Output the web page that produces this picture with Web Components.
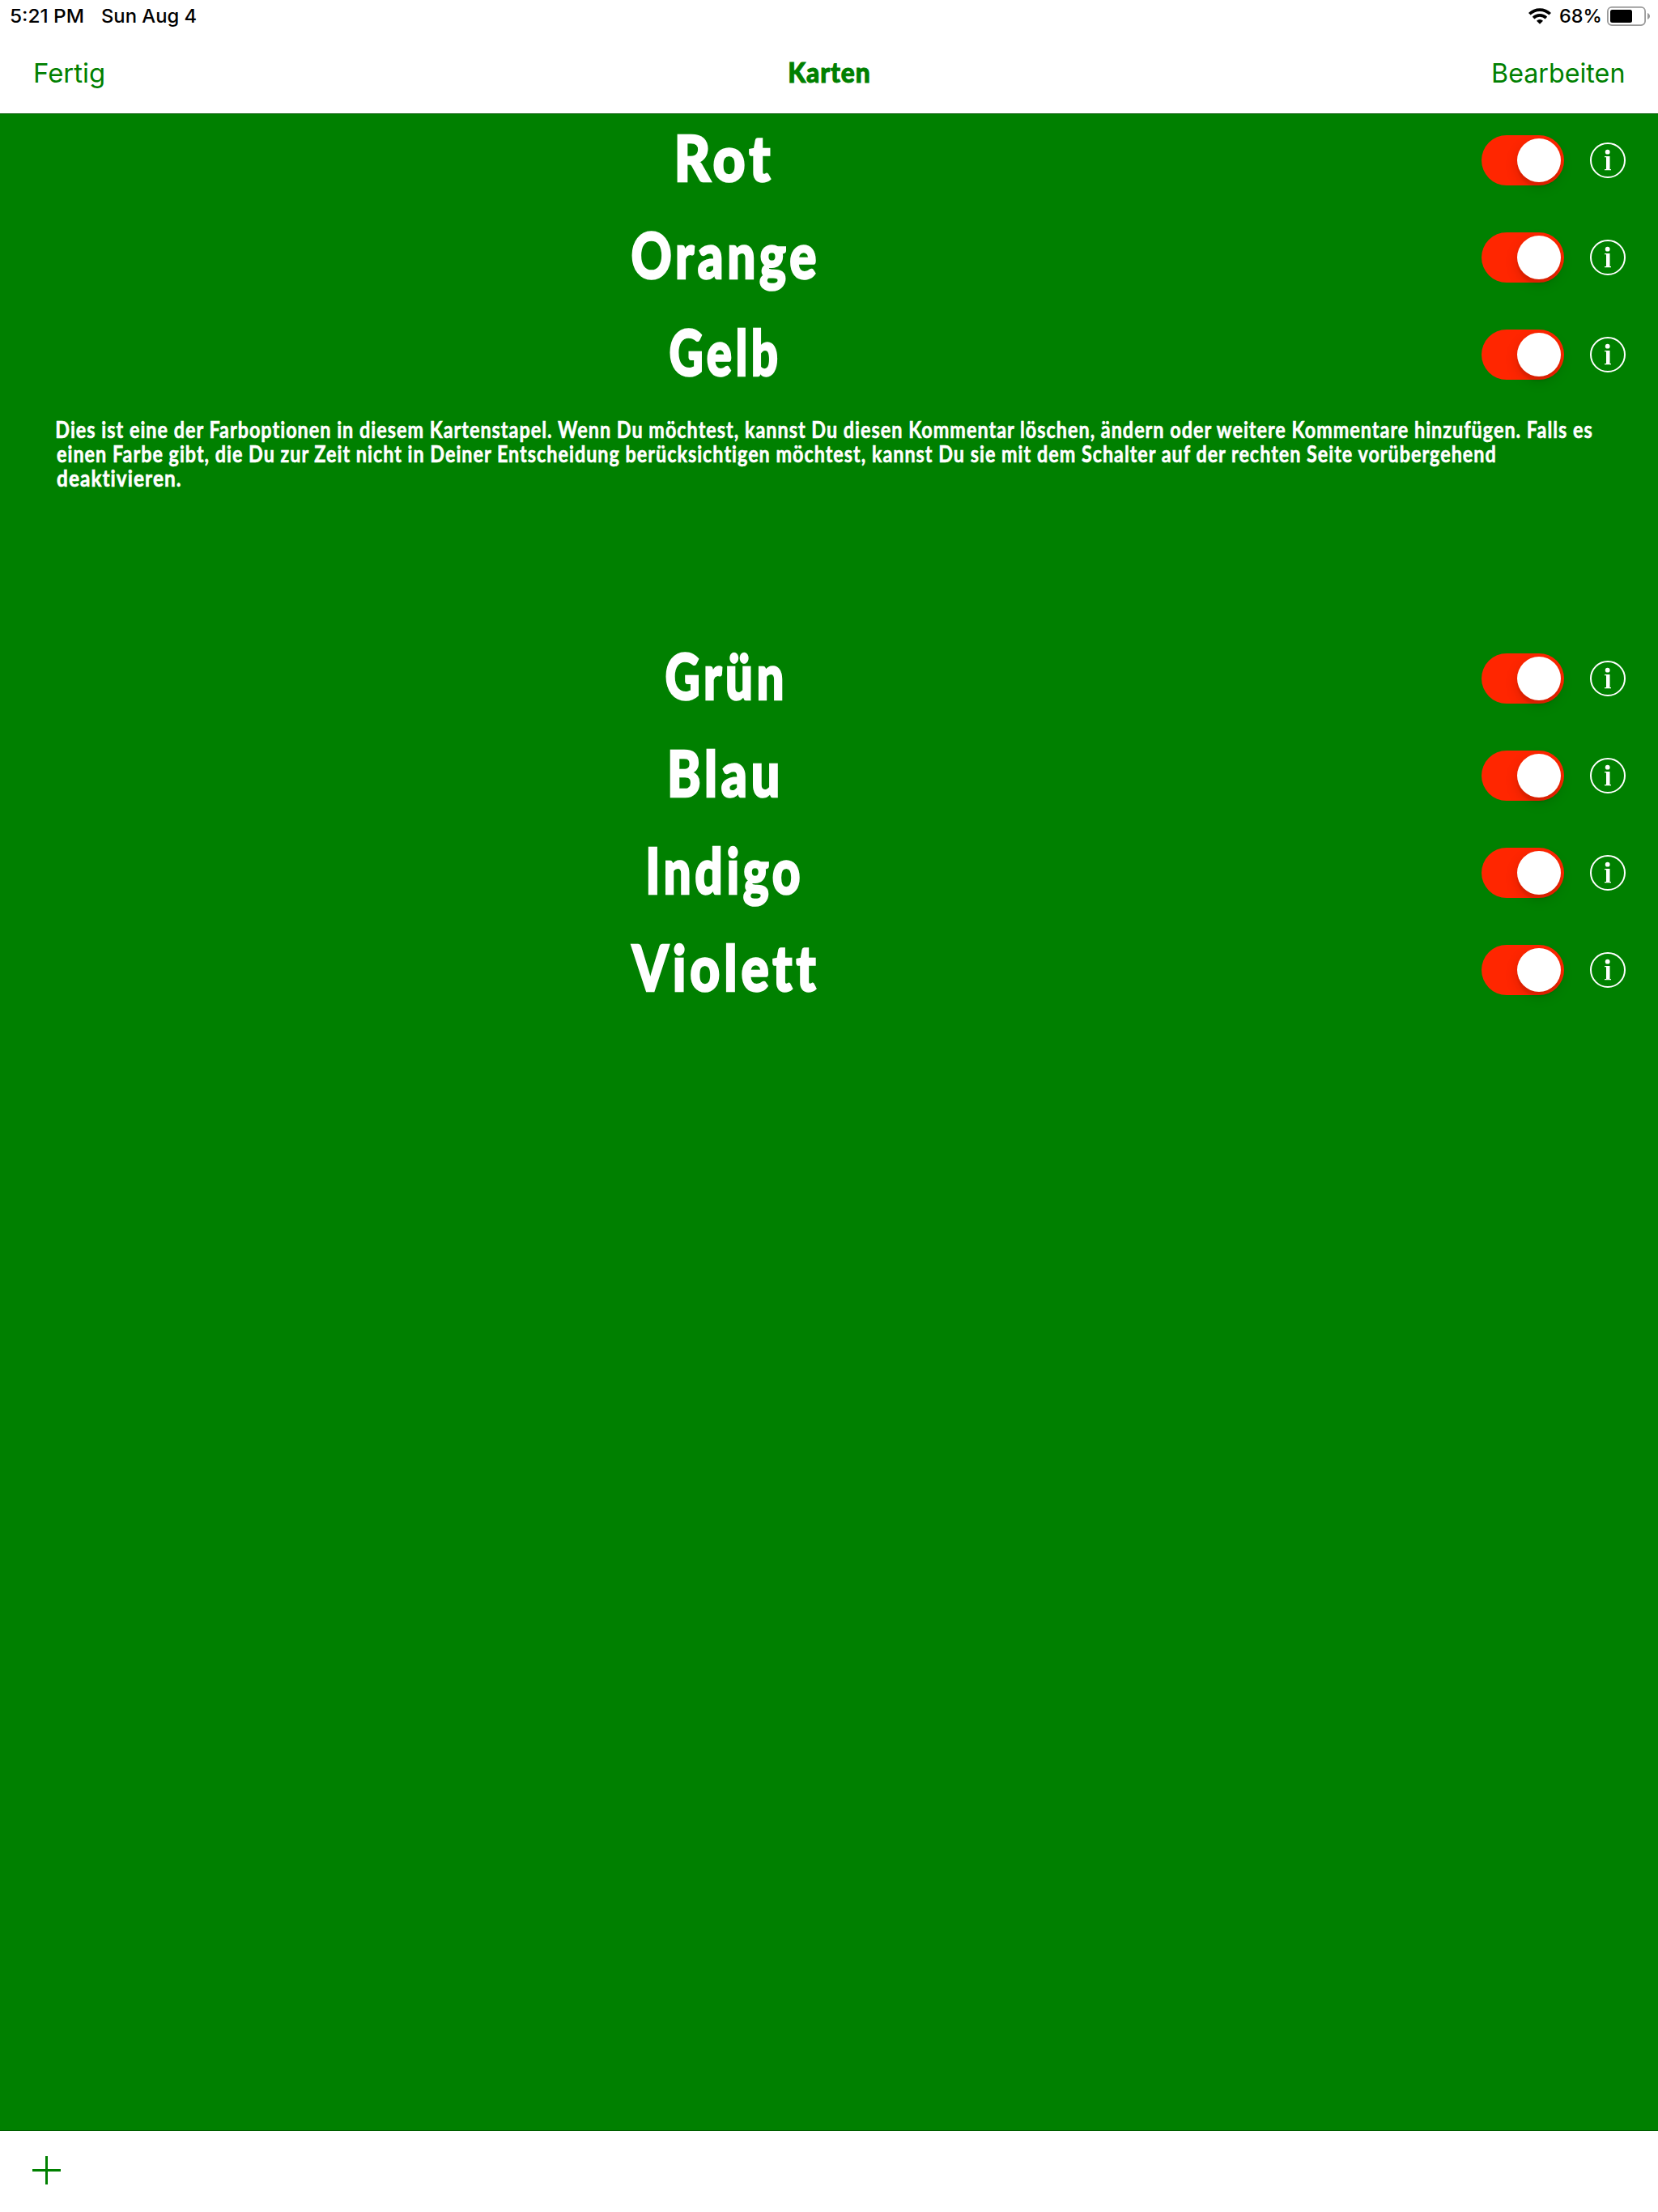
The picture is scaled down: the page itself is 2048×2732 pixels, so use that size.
<!DOCTYPE html>
<html lang="de">
<head>
<meta charset="utf-8">
<title>Karten</title>
<style>
html,body{margin:0;padding:0;background:#fff}
body{width:2048px;height:2732px;overflow:hidden}
</style>
</head>
<body>
<cards-app></cards-app>
<script>
const ctx = document.createElement('canvas').getContext('2d');
const define = (name, html, ready) => customElements.define(name, class extends HTMLElement {
  connectedCallback() {
    if (this.shadowRoot) return;
    const root = this.attachShadow({ mode: 'open' });
    const t = document.createElement('template');
    t.innerHTML = html;
    root.append(t.content.cloneNode(true));
    if (ready) ready(this, root);
  }
});

// One line of text whose ink is scaled to an exact width.
define('fit-text', `
<style>
:host{display:block;flex:none;white-space:nowrap}
span{display:inline-block;vertical-align:top;transform-origin:0 50%;letter-spacing:inherit}
</style><span></span>`, (host, root) => {
  const span = root.querySelector('span');
  const text = host.getAttribute('text');
  span.textContent = text;
  const cs = getComputedStyle(host);
  ctx.font = cs.fontWeight + ' ' + cs.fontSize + ' ' + cs.fontFamily;
  const m = ctx.measureText(text);
  const gap = parseFloat(cs.letterSpacing) || 0;
  const full = span.getBoundingClientRect().width;
  const ink = full - gap + m.actualBoundingBoxLeft - (m.width - m.actualBoundingBoxRight);
  const w = +host.getAttribute('w');
  host.style.width = w + 'px';
  span.style.marginRight = Math.min(0, w - full) + 'px';
  span.style.transform = 'scaleX(' + w / ink + ') translateX(' + m.actualBoundingBoxLeft + 'px)';
});

define('status-bar', `
<style>
:host{display:flex;height:40px;align-items:center;padding:0 10px 0 13px;font:500 23px/40px Inter,sans-serif;color:#000}
.date{margin-left:22.5px}
.wifi{margin-left:auto;margin-right:11px}
.battery{margin-left:8px}
svg{display:block;flex:none}
</style>
<fit-text text="5:21 PM" w="90"></fit-text>
<fit-text class="date" text="Sun Aug 4" w="116"></fit-text>
<svg class="wifi" width="28" height="20" viewBox="0 0 28 20">
  <g fill="none" stroke="#000" stroke-width="3.7"><path d="M1.3 7.3a18 18 0 0 1 25.4 0"/><path d="M6.1 12.1a11.3 11.3 0 0 1 15.8 0"/></g>
  <path d="M14 19.8l-4-4.1a5.8 5.8 0 0 1 8 0z"/>
</svg>
<fit-text text="68%" w="50"></fit-text>
<svg class="battery" width="53" height="24" viewBox="0 0 53 24">
  <rect x=".9" y=".9" width="46.2" height="22.2" rx="5" fill="none" stroke="#999" stroke-width="1.8"/>
  <rect x="4" y="4" width="27" height="16" rx="2.5"/>
  <path d="M50 8c4 1.5 4 6.500 0 8z" fill="#999"/>
</svg>`);

define('nav-bar', `
<style>
:host{display:flex;height:100px;justify-content:space-between;align-items:center;padding:0 43px 0 42.5px;color:#008000;font:400 33px/100px Inter,sans-serif}
.side{flex:1;display:flex}
.end{justify-content:flex-end}
.title{font-family:Lato,sans-serif;font-weight:900;font-size:34px;line-height:98px;padding-bottom:2px;letter-spacing:1px;-webkit-text-stroke:1px #008000}
</style>
<div class="side"><fit-text text="Fertig" w="85"></fit-text></div>
<fit-text class="title" text="Karten" w="98.500"></fit-text>
<div class="side end"><fit-text text="Bearbeiten" w="161"></fit-text></div>`);

define('toggle-switch', `
<style>
:host{display:flex;box-sizing:border-box;width:102px;height:62px;padding:4px;border-radius:31px;background:#ff2600;justify-content:flex-end}
i{display:block;width:54px;height:54px;border-radius:50%;background:#fff;box-shadow:0 6px 16px rgba(0,0,0,.15),0 6px 2px rgba(0,0,0,.06)}
</style><i></i>`);

define('info-button', `
<style>:host{display:block;width:44px;height:44px}svg{display:block}</style>
<svg width="44" height="44" viewBox="0 0 44 44" fill="#fff">
  <circle cx="22" cy="22" r="21" fill="none" stroke="#fff" stroke-width="2"/>
  <circle cx="21.700" cy="11.700" r="2.900"/>
  <path d="M18 17h6.500v16H26v1.300h-8V33h2V18.300h-2z"/>
</svg>`);

define('card-row', `
<style>
:host{display:flex;height:120px;align-items:center;padding-right:40px}
.label{flex:1;display:flex;justify-content:center;padding:0 42px 9px 0;color:#fff;font:900 78px/100px Lato,sans-serif;letter-spacing:6px;-webkit-text-stroke:2.5px #fff}
info-button{margin-left:32px}
</style>
<div class="label"></div>
<toggle-switch></toggle-switch><info-button></info-button>`, (host, root) => {
  const label = document.createElement('fit-text');
  label.setAttribute('text', host.getAttribute('name'));
  label.setAttribute('w', host.getAttribute('w') - 2);
  root.querySelector('.label').append(label);
});

define('card-comment', `
<style>
:host{display:block;box-sizing:border-box;height:280px;padding:16.5px 70px 0 70.4px;color:#fff;font:700 28px/30.3px Lato,sans-serif;letter-spacing:1.2px;-webkit-text-stroke:.6px #fff}
</style>
<fit-text w="1896.500" text="Dies ist eine der Farboptionen in diesem Kartenstapel. Wenn Du möchtest, kannst Du diesen Kommentar löschen, ändern oder weitere Kommentare hinzufügen. Falls es"></fit-text>
<fit-text w="1777" text="einen Farbe gibt, die Du zur Zeit nicht in Deiner Entscheidung berücksichtigen möchtest, kannst Du sie mit dem Schalter auf der rechten Seite vorübergehend"></fit-text>
<fit-text w="153" text="deaktivieren."></fit-text>`);

define('tool-bar', `
<style>
:host{display:block;box-sizing:border-box;height:101px;border-top:1px solid #005a00;background:#fff;padding:31px 40px 0}
svg{display:block}
</style>
<svg width="35" height="35" viewBox="0 0 35 35" fill="#008000"><path d="M16 0h3v16h16v3H19v16h-3V19H0v-3h16z"/></svg>`);

define('cards-app', `
<style>
:host{display:flex;flex-direction:column;width:2048px;height:2732px;background:#008000}
header{flex:none;background:#fff;border-bottom:1px solid #005a00}
main{flex:1;margin-top:-3px}
</style>
<header><status-bar></status-bar><nav-bar></nav-bar></header>
<main>
<card-row name="Rot" w="117"></card-row>
<card-row name="Orange" w="228"></card-row>
<card-row name="Gelb" w="134"></card-row>
<card-comment></card-comment>
<card-row name="Grün" w="145"></card-row>
<card-row name="Blau" w="134"></card-row>
<card-row name="Indigo" w="188"></card-row>
<card-row name="Violett" w="230"></card-row>
</main>
<tool-bar></tool-bar>`);
</script>
</body>
</html>
